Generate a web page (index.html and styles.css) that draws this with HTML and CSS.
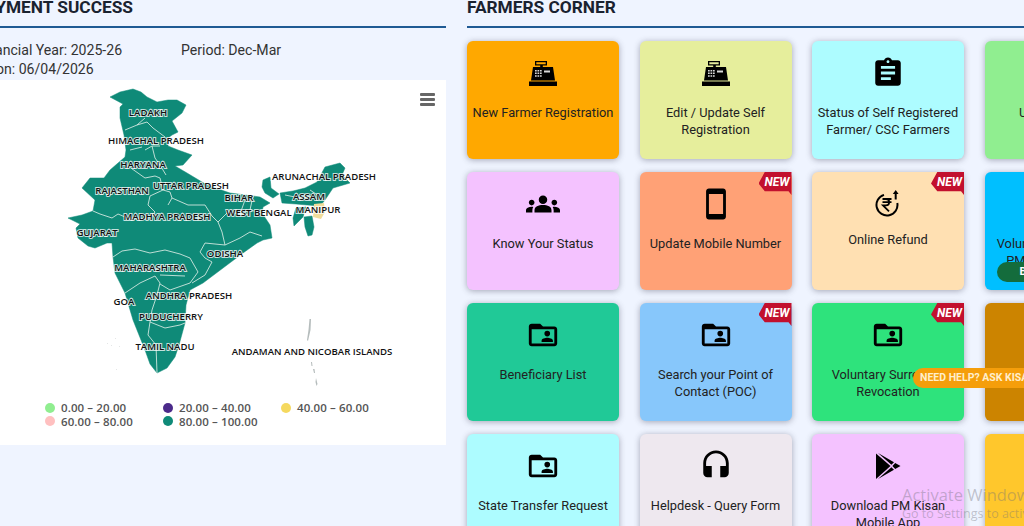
FILE: index.html
```html
<!DOCTYPE html>
<html lang="en">
<head>
<meta charset="utf-8">
<title>PM Kisan</title>
<link rel="stylesheet" href="styles.css">
</head>
<body>
<svg class="defs" width="0" height="0" aria-hidden="true">
  <symbol id="i-reg" viewBox="0 0 34 34">
    <path d="M9 5h12v4.500h-4.200V11H27l2 13.500H5L7 11h7.200V9.500H9zM10.300 6.200v2.100h9.400V6.200z" fill-rule="evenodd"/>
    <path d="M3 25.500h28V30H3z"/>
    <path fill="#fff" fill-opacity=".85" d="M9 14h1.700v1.500H9zM11.500 14h1.700v1.500h-1.700zM14 14h1.700v1.500H14zM9 16.600h1.700v1.500H9zM11.500 16.600h1.700v1.500h-1.700zM14 16.600h1.700v1.500H14zM9 19.200h1.700v1.500H9zM11.500 19.200h1.700v1.500h-1.700zM14 19.200h1.700v1.500H14zM18 14.500h6v2h-6z"/>
  </symbol>
  <symbol id="i-assign" viewBox="0 0 24 24"><path d="M19 3h-4.180C14.400 1.840 13.300 1 12 1c-1.300 0-2.400.84-2.820 2H5c-1.100 0-2 .9-2 2v14c0 1.100.9 2 2 2h14c1.100 0 2-.9 2-2V5c0-1.100-.9-2-2-2zm-7 0c.55 0 1 .45 1 1s-.45 1-1 1-1-.45-1-1 .45-1 1-1zm2 14H7v-2h7v2zm3-4H7v-2h10v2zm0-4H7V7h10v2z"/></symbol>
  <symbol id="i-groups" viewBox="0 0 24 24"><path d="M12 12.750c1.630 0 3.070.39 4.240.9 1.080.48 1.760 1.560 1.760 2.730V18H6v-1.610c0-1.180.68-2.260 1.760-2.730 1.170-.52 2.610-.91 4.240-.91zM4 13c1.100 0 2-.9 2-2s-.9-2-2-2-2 .9-2 2 .9 2 2 2zm1.130 1.100c-.37-.06-.74-.1-1.130-.1-.99 0-1.930.21-2.780.58C.48 14.900 0 15.620 0 16.430V18h4.500v-1.610c0-.83.23-1.610.63-2.290zM20 13c1.100 0 2-.9 2-2s-.9-2-2-2-2 .9-2 2 .9 2 2 2zm4 3.430c0-.81-.48-1.530-1.220-1.850-.85-.37-1.790-.58-2.780-.58-.39 0-.76.04-1.130.1.4.68.63 1.460.63 2.290V18H24v-1.570zM12 6c1.660 0 3 1.340 3 3s-1.340 3-3 3-3-1.340-3-3 1.340-3 3-3z"/></symbol>
  <symbol id="i-phone" viewBox="0 0 24 24"><path d="M17 1.010L7 1c-1.100 0-2 .9-2 2v18c0 1.100.9 2 2 2h10c1.100 0 2-.9 2-2V3c0-1.100-.9-1.990-2-1.990zM17 19H7V5h10v14z"/></symbol>
  <symbol id="i-folder" viewBox="0 0 24 24"><path d="M20 6h-8l-2-2H4c-1.100 0-1.990.9-1.990 2L2 18c0 1.100.9 2 2 2h16c1.100 0 2-.9 2-2V8c0-1.100-.9-2-2-2zm0 12H4V8h16v10z"/><path d="M15 13a2 2 0 1 0 0-4 2 2 0 0 0 0 4zm-4 4h8v-1c0-1.330-2.670-2-4-2s-4 .67-4 2v1z"/></symbol>
  <symbol id="i-head" viewBox="0 0 24 24"><path d="M12 1c-4.970 0-9 4.030-9 9v7c0 1.660 1.340 3 3 3h3v-8H5v-2c0-3.870 3.130-7 7-7s7 3.130 7 7v2h-4v8h3c1.660 0 3-1.340 3-3v-7c0-4.970-4.030-9-9-9z"/></symbol>
  <symbol id="i-play" viewBox="0 0 34 34">
    <path d="M5 4.500L19.500 17 5 30z"/>
    <path d="M7 4l16 9.200-2.600 2.600zM7 30l16-9.200-2.600-2.600zM24.200 14l5.300 3-5.300 3-2.800-3z"/>
  </symbol>
  <symbol id="i-refund" viewBox="0 0 30 30">
    <g fill="none" stroke="#000" stroke-width="2">
      <path d="M11 7.900A10.500 10.500 0 1 0 24.300 16"/>
      <path stroke-width="1.800" d="M9.500 12h9M9.500 15.200h9M10 12h3c4.200 0 4.200 6.400 0 6.400h-3l6 6"/>
      <path d="M22.700 12.500V6"/>
    </g>
    <path d="M19.800 7l2.900-4 2.900 4z"/>
  </symbol>
</svg>

<div class="page">
  <section class="col-left">
    <h2 class="head head-left">PAYMENT SUCCESS</h2>
    <div class="info">
      <div class="info-row"><span class="fy">Financial Year: 2025-26</span><span>Period: Dec-Mar</span></div>
      <div class="updated">As on: 06/04/2026</div>
    </div>
    <div class="chart">
      <div class="burger"><i></i><i></i><i></i></div>
      <svg class="map" viewBox="-40 80 486 321" width="486" height="321">
        <path class="land" d="M110 97L120 92L133 89L141 92L147 97L157 102L168 100L177 100L186 105L182 113L172 121L178 132L172 135L168 138L168 146L178 150L192 155L183 165L175 166L187 173L207 185L230 193L253 196L260 197L270 203L263 207L262 213L270 225L272 238L263 240L257 243L243 253L227 265L203 283L190 290L186 305L185 323L179 345L175 357L167 368L157 373L150 364L145 350L133 320L125 293L115 273L113 257L112 243L107 243L95 248L88 246L78 238L76 228L80 224L68 218L82 215L93 211L95 200L82 188L90 178L104 178L110 170L125 157L126 150L124 135L120 118L120 107L123 104z"/>
        <path class="land" d="M262 187L263 180L270 177L271 188L279 194L273 198L265 193z"/>
        <path class="land" d="M280 193L293 191L305 188L317 182L325 167L340 163L345 168L342 175L350 183L333 188L325 200L320 206L307 205L296 204L282 203z"/>
        <path class="land" d="M296 208L306 207L303 217L294 226L293 218z"/>
        <path class="land" d="M304 217L312 216L314 227L312 235L308 236L305 227z"/>
        <path class="mani" d="M314 204L324 203L325 212L321 219L313 217z"/>
        <path class="lines" d="M125 130L137 125L147 122L153 128L165 137M137 125L145 118M145 150L152 146L155 158L160 165L166 175M130 150L142 147M152 146L160 146M128 166L145 178L155 176L160 178L163 190L150 196L148 205L155 212L150 219L130 219L118 214L112 218L100 214L93 211M163 190L170 192L172 198L188 205L205 205L212 216M172 198L168 205M212 216L218 222L228 212L240 214L250 215M218 222L222 232L225 245L205 243L200 252L205 258L212 262L205 275L192 283M225 245L240 238L250 232L262 236M240 214L245 200M253 196L250 210L262 213M113 257L122 251L135 249L150 253L165 250L180 254L190 258L198 272M155 276L160 283L157 295L152 310L150 322L165 328L180 325L185 323M125 293L140 283L155 276M160 275L185 276M198 272L190 283L170 290L160 284M150 322L148 335L156 345L157 373M285 195L300 198L315 196M325 200L310 190"/>
        <path class="isle" d="M309.500 319L311 319L310.500 330L308 341L307 340L308.500 330zM311 362L312 362L312.500 366L311.500 366zM313 369L314.500 369L315 373L314 373zM316 378L317.500 384L316.500 386L315.500 382z"/>
        <path class="faint" d="M107 343h1v1h-1zM111 345h1v1h-1zM115 338h1v1h-1zM119 346h1v1h-1zM116 369h1v1h-1z"/>
        <g class="labels">
          <text x="148" y="117">LADAKH</text>
          <text x="156" y="145">HIMACHAL PRADESH</text>
          <text x="143" y="169">HARYANA</text>
          <text x="122" y="195">RAJASTHAN</text>
          <text x="191" y="190">UTTAR PRADESH</text>
          <text x="239" y="202">BIHAR</text>
          <text x="259" y="217">WEST BENGAL</text>
          <text x="167" y="221">MADHYA PRADESH</text>
          <text x="97" y="237">GUJARAT</text>
          <text x="225" y="258">ODISHA</text>
          <text x="150" y="272">MAHARASHTRA</text>
          <text x="124" y="306">GOA</text>
          <text x="189" y="300">ANDHRA PRADESH</text>
          <text x="171" y="321">PUDUCHERRY</text>
          <text x="165" y="351">TAMIL NADU</text>
          <text x="312" y="356">ANDAMAN AND NICOBAR ISLANDS</text>
          <text x="324" y="181">ARUNACHAL PRADESH</text>
          <text x="309" y="201">ASSAM</text>
          <text x="318" y="214">MANIPUR</text>
        </g>
      </svg>
      <ul class="legend">
        <li><i class="dot d1"></i>0.00 – 20.00</li>
        <li><i class="dot d2"></i>20.00 – 40.00</li>
        <li><i class="dot d3"></i>40.00 – 60.00</li>
        <li><i class="dot d4"></i>60.00 – 80.00</li>
        <li><i class="dot d5"></i>80.00 – 100.00</li>
      </ul>
    </div>
  </section>

  <section class="col-right">
    <h2 class="head">FARMERS CORNER</h2>
    <div class="cards">
      <a class="card c1"><svg class="ico"><use href="#i-reg"/></svg><span>New Farmer Registration</span></a>
      <a class="card c2"><svg class="ico"><use href="#i-reg"/></svg><span>Edit / Update Self Registration</span></a>
      <a class="card c3"><svg class="ico"><use href="#i-assign"/></svg><span>Status of Self Registered Farmer/ CSC Farmers</span></a>
      <a class="card c4"><svg class="ico"><use href="#i-assign"/></svg><span>Update Details</span></a>

      <a class="card c5"><svg class="ico"><use href="#i-groups"/></svg><span>Know Your Status</span></a>
      <a class="card c6"><b class="new">NEW</b><svg class="ico"><use href="#i-phone"/></svg><span>Update Mobile Number</span></a>
      <a class="card c7"><b class="new">NEW</b><svg class="ico ico-sm"><use href="#i-refund"/></svg><span>Online Refund</span></a>
      <a class="card c8"><svg class="ico"><use href="#i-assign"/></svg><span>Voluntary Surrender of PM KISAN Benefits</span><b class="pill">Benefits</b></a>

      <a class="card c9"><svg class="ico"><use href="#i-folder"/></svg><span>Beneficiary List</span></a>
      <a class="card c10"><b class="new">NEW</b><svg class="ico"><use href="#i-folder"/></svg><span>Search your Point of Contact (POC)</span></a>
      <a class="card c11"><b class="new">NEW</b><svg class="ico"><use href="#i-folder"/></svg><span>Voluntary Surrender Revocation</span></a>
      <a class="card c12"><svg class="ico"><use href="#i-folder"/></svg><span></span></a>

      <a class="card c3"><svg class="ico"><use href="#i-folder"/></svg><span>State Transfer Request</span></a>
      <a class="card c13"><svg class="ico"><use href="#i-head"/></svg><span>Helpdesk - Query Form</span></a>
      <a class="card c5"><svg class="ico"><use href="#i-play"/></svg><span>Download PM Kisan Mobile App</span></a>
      <a class="card c14"><svg class="ico"><use href="#i-play"/></svg><span></span></a>
    </div>
  </section>
</div>

<div class="help">NEED HELP? ASK KISAN EMITRA</div>
<div class="watermark"><div class="wm1">Activate Windows</div><div class="wm2">Go to Settings to activate Windows.</div></div>
</body>
</html>
```
FILE: styles.css
```css
* { box-sizing: border-box; }
html, body { margin: 0; height: 526px; overflow: hidden; background: #eff4ff; }
body { position: relative; font-family: Roboto, "Liberation Sans", sans-serif; color: #222; }
.defs { position: absolute; }

.page { display: flex; gap: 21px; margin: -14px 0 0 -40px; width: 1200px; }
.col-left { flex: 0 0 486px; }
.col-right { flex: 0 0 auto; }

.head { margin: 0; height: 42px; padding-top: 10.500px; font-size: 17.300px; line-height: 20px; font-weight: 700; color: #1a2230; border-bottom: 2px solid #1f5a94; }
.head-left { padding-left: 15px; }

.info { padding: 13px 0 0 16px; font-size: 14.100px; line-height: 19px; color: #333; height: 52px; }
.info-row { display: flex; }
.fy { width: 205px; }

.chart { position: relative; height: 365px; background: #fff; }
.map { display: block; }
.land { fill: #0f8a78; stroke: #0f8a78; stroke-width: .5; stroke-linejoin: round; }
.mani { fill: #f0dd9c; }
.lines { fill: none; stroke: #cfe6df; stroke-width: .9; }
.isle { fill: #b5bcbc; }
.faint { fill: #e4e6e6; }
.labels { transform: translateY(-1px); }
.labels text { font-family: "Open Sans", "DejaVu Sans", sans-serif; font-size: 9.600px; font-weight: 600; text-anchor: middle; fill: #111; stroke: #fff; stroke-width: 2px; stroke-opacity: .75; paint-order: stroke; }

.burger { position: absolute; top: 13px; right: 0; margin-right: 11px; display: flex; flex-direction: column; gap: 2px; }
.burger i { display: block; width: 15px; height: 3px; border-radius: 1px; background: #666; }

.legend { margin: 0; padding: 0 0 0 85px; list-style: none; display: grid; grid-template-columns: repeat(3, 118px); grid-auto-rows: 13.500px; font-family: "Open Sans", "DejaVu Sans", sans-serif; font-size: 11.500px; font-weight: 600; letter-spacing: .1px; color: #555; }
.legend li { display: flex; align-items: center; gap: 6px; white-space: nowrap; }
.dot { flex: none; width: 10px; height: 10px; border-radius: 50%; }
.d1 { background: #90ee90; }
.d2 { background: #4b2a8a; }
.d3 { background: #f5d95f; }
.d4 { background: #ffc0c0; }
.d5 { background: #0f8a78; }

.cards { margin-top: 13px; display: grid; grid-template-columns: repeat(4, 152px); grid-auto-rows: 118px; column-gap: 20.500px; row-gap: 13px; }
.card { position: relative; display: flex; flex-direction: column; align-items: center; padding: 15px 4px 0; border-radius: 6px; box-shadow: 0 1px 6px rgba(40,40,60,.38); text-align: center; font-size: 12.800px; line-height: 17px; color: #222; }
.ico { display: block; flex: none; width: 34px; height: 34px; margin-bottom: 13.500px; fill: #000; }
.ico-sm { width: 30px; height: 30px; }

.c1 { background: #ffa800; }
.c2 { background: #e6ee9c; }
.c3 { background: #adfcff; }
.c4 { background: #90ee90; }
.c5 { background: #f4c2ff; }
.c6 { background: #ffa176; }
.c7 { background: #ffe0b2; }
.c8 { background: #00bfff; }
.c9 { background: #20c997; }
.c10 { background: #87c7fb; }
.c11 { background: #2ee37c; }
.c12 { background: #cc8400; }
.c13 { background: #eee8ef; }
.c14 { background: #ffc72c; }

.new { position: absolute; top: 0; right: 0; width: 33px; height: 23px; padding: 3px 2px 0 6px; background: #c2102e; clip-path: polygon(0 50%, 19% 0, 100% 0, 100% 100%, 91% 84%, 19% 84%); font-size: 12px; line-height: 14px; font-style: italic; font-weight: 700; color: #fff; text-align: right; }
.pill { position: absolute; left: 12px; bottom: 8px; width: 128px; height: 20px; padding-left: 23px; border-radius: 10px; background: #146c3c; color: #fff; font-size: 11px; line-height: 20px; text-align: left; }

.help { position: absolute; left: 913px; top: 368px; width: 140px; height: 20px; padding-left: 7px; border-radius: 10px; background: #f59e0b; color: #ffeecb; font-size: 10.500px; font-weight: 700; line-height: 20px; white-space: nowrap; }
.watermark { position: absolute; left: 902px; top: 484px; font-family: "Open Sans", sans-serif; color: rgba(110,110,120,.38); white-space: nowrap; }
.wm1 { font-size: 16.500px; line-height: 21px; }
.wm2 { font-size: 12.500px; line-height: 18px; }
```
